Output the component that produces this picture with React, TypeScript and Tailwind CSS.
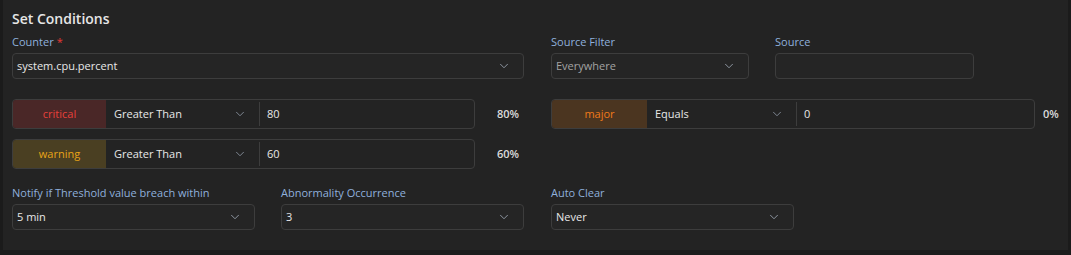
import { ChevronDown } from 'lucide-react';

const font = { fontFamily: '"Open Sans", "Noto Sans", sans-serif' };

function Label({ children, required }: { children: React.ReactNode; required?: boolean }) {
  return (
    <div className="h-[22px] flex items-center text-[11px] text-[#8fb0dc]">
      {children}
      {required && <span className="ml-[3px] text-[#e53935]">*</span>}
    </div>
  );
}

function Select({ value, muted, className }: { value: string; muted?: boolean; className: string }) {
  return (
    <div
      className={`h-[26px] flex items-center justify-between pl-[4px] pr-[12px] rounded-[4px] border border-[#3d3d3d] bg-[#252525] text-[11px] ${muted ? 'text-[#a3a3a3]' : 'text-[#e8e8e8]'} ${className}`}
    >
      <span>{value}</span>
      <ChevronDown className="w-[14px] h-[14px] text-[#9aa3b0]" strokeWidth={1.5} />
    </div>
  );
}

type Threshold = {
  level: string;
  badge: string;
  op: string;
  value: string;
  width: string;
  badgeW: string;
  opW: string;
  gap: string;
};

function ThresholdRow({ t, pct }: { t: Threshold; pct: string }) {
  return (
    <div className="flex items-center">
      <div className={`h-[30px] shrink-0 flex rounded-[4px] border border-[#3d3d3d] bg-[#232323] overflow-hidden ${t.width}`}>
        <div className={`flex items-center justify-center text-[11px] ${t.badge} ${t.badgeW}`}>{t.level}</div>
        <div className={`flex items-center justify-between pl-[8px] pr-[12px] text-[11px] text-[#e8e8e8] ${t.opW}`}>
          <span>{t.op}</span>
          <ChevronDown className="w-[14px] h-[14px] text-[#8a93a0]" strokeWidth={1.5} />
        </div>
        <div className="my-[2px] w-px bg-[#3d3d3d]" />
        <div className="flex-1 flex items-center pl-[7px] text-[11px] text-[#e8e8e8]">{t.value}</div>
      </div>
      <span className={`text-[11px] font-semibold text-[#dcdcdc] ${t.gap}`}>{pct}</span>
    </div>
  );
}

export default function App() {
  const critical: Threshold = {
    level: 'critical',
    badge: 'bg-[#4a2727] text-[#e8403a]',
    op: 'Greater Than',
    value: '80',
    width: 'w-[463px]',
    badgeW: 'w-[93px]',
    opW: 'w-[153px]',
    gap: 'ml-[22px]',
  };
  const warning: Threshold = {
    level: 'warning',
    badge: 'bg-[#4a3f22] text-[#e8a317]',
    op: 'Greater Than',
    value: '60',
    width: 'w-[463px]',
    badgeW: 'w-[93px]',
    opW: 'w-[153px]',
    gap: 'ml-[22px]',
  };
  const major: Threshold = {
    level: 'major',
    badge: 'bg-[#4b3520] text-[#f07a1a]',
    op: 'Equals',
    value: '0',
    width: 'w-[484px]',
    badgeW: 'w-[95px]',
    opW: 'w-[149px]',
    gap: 'ml-[8px]',
  };

  return (
    <div className="w-[1071px] h-[255px] bg-[#1b1b1b] pl-[3px] pr-[3px]" style={font}>
      <div className="h-[250px] bg-[#232323] pl-[9px] pt-[7px]">
        <h2 className="h-[22px] flex items-center text-[14px] font-semibold text-[#e6e6e6]">Set Conditions</h2>

        {/* Counter / source */}
        <div className="mt-[2px] flex">
          <div className="w-[512px] shrink-0">
            <Label required>Counter</Label>
            <Select value="system.cpu.percent" className="w-full" />
          </div>
          <div className="ml-[27px] w-[198px] shrink-0">
            <Label>Source Filter</Label>
            <Select value="Everywhere" muted className="w-full" />
          </div>
          <div className="ml-[26px] w-[199px] shrink-0">
            <Label>Source</Label>
            <div className="h-[26px] rounded-[4px] border border-[#3d3d3d] bg-[#252525]" />
          </div>
        </div>

        {/* Thresholds */}
        <div className="mt-[20px] flex">
          <div className="w-[539px] shrink-0 flex flex-col gap-[10px]">
            <ThresholdRow t={critical} pct="80%" />
            <ThresholdRow t={warning} pct="60%" />
          </div>
          <div className="shrink-0">
            <ThresholdRow t={major} pct="0%" />
          </div>
        </div>

        {/* Notification settings */}
        <div className="mt-[13px] flex">
          <div className="w-[243px] shrink-0">
            <Label>Notify if Threshold value breach within</Label>
            <Select value="5 min" className="w-full" />
          </div>
          <div className="ml-[26px] w-[243px] shrink-0">
            <Label>Abnormality Occurrence</Label>
            <Select value="3" className="w-full" />
          </div>
          <div className="ml-[27px] w-[243px] shrink-0">
            <Label>Auto Clear</Label>
            <Select value="Never" className="w-full" />
          </div>
        </div>
      </div>
    </div>
  );
}
